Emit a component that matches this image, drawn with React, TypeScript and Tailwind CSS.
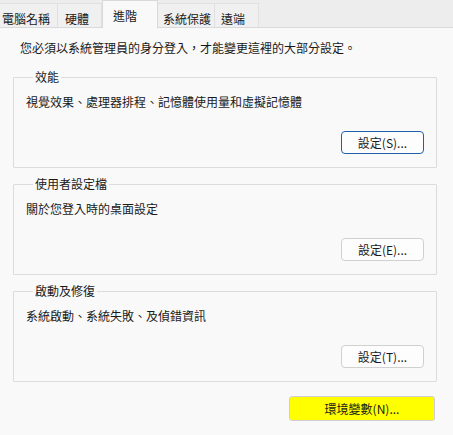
import React from "react";

const font = { fontFamily: '"Noto Sans CJK TC", "Noto Sans", sans-serif' };

function Tab({ label, w, pl, selected }: { label: string; w: string; pl: string; selected?: boolean }) {
  if (selected) {
    return (
      <div className={`${w} ${pl} h-[28px] -mb-px flex items-start pt-[7px] bg-[#f9f9f9] border-x border-t border-[#d9d9d9] relative z-10`}>
        <span>{label}</span>
      </div>
    );
  }
  return (
    <div className={`${w} ${pl} h-[24px] flex items-start pt-[7px] bg-[#f0f0f0] border-r border-t border-[#e0e0e0]`}>
      <span>{label}</span>
    </div>
  );
}

function Btn({ label, focused }: { label: string; focused?: boolean }) {
  return (
    <div
      className={`w-[83px] h-[23px] flex items-center justify-center rounded-[4px] bg-[#fdfdfd] text-[12px] leading-none text-[#1a1a1a] ${
        focused ? "border-[1.5px] border-[#1f5fa8]" : "border border-[#d0d0d0]"
      }`}
    >
      {label}
    </div>
  );
}

function Group({ title, desc, btn, focused }: { title: string; desc: string; btn: string; focused?: boolean }) {
  return (
    <fieldset className="border border-[#dcdcdc] rounded-[1px] w-[424px] ml-[13px] pl-[12px] pr-[12px] pb-[13px]">
      <legend className="ml-[7px] px-[2px] text-[12px] leading-[16px] text-[#1a1a1a]">{title}</legend>
      <div className="pt-[9px] text-[12px] leading-[16px] text-[#1a1a1a]">{desc}</div>
      <div className="flex justify-end mt-[21px]">
        <Btn label={btn} focused={focused} />
      </div>
    </fieldset>
  );
}

export default function App() {
  return (
    <div className="w-[453px] h-[435px] bg-[#f9f9f9] text-[12px] text-[#1a1a1a] overflow-hidden" style={font}>
      <div className="h-[28px] bg-[#ededed] border-b border-[#d9d9d9] flex items-end leading-[16px]">
        <Tab label="電腦名稱" w="w-[58px]" pl="pl-[2px]" />
        <Tab label="硬體" w="w-[44px]" pl="pl-[7px]" />
        <Tab label="進階" w="w-[56px]" pl="pl-[10px]" selected />
        <Tab label="系統保護" w="w-[57px]" pl="pl-[5px]" />
        <Tab label="遠端" w="w-[44px]" pl="pl-[6px]" />
      </div>
      <div className="pt-[12px] pl-[20px] text-[12px] leading-[16px]">您必須以系統管理員的身分登入，才能變更這裡的大部分設定。</div>
      <div className="mt-[13px] flex flex-col gap-[8px]">
        <Group title="效能" desc="視覺效果、處理器排程、記憶體使用量和虛擬記憶體" btn="設定(S)..." focused />
        <Group title="使用者設定檔" desc="關於您登入時的桌面設定" btn="設定(E)..." />
        <Group title="啟動及修復" desc="系統啟動、系統失敗、及偵錯資訊" btn="設定(T)..." />
      </div>
      <div className="flex justify-end pr-[18px] mt-[14px]">
        <div className="w-[146px] h-[25px] flex items-center justify-center rounded-[3px] bg-[#ffff00] border border-[#cfcfcf] text-[12px] leading-none">
          環境變數(N)...
        </div>
      </div>
    </div>
  );
}
